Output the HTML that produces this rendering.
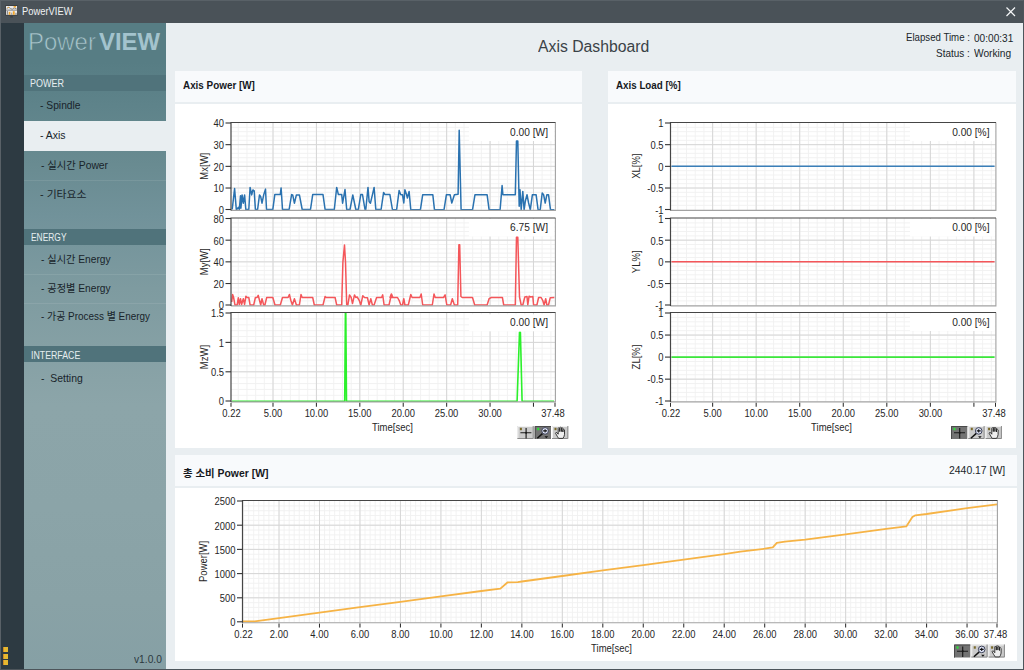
<!DOCTYPE html>
<html lang="ko"><head><meta charset="utf-8"><title>PowerVIEW</title>
<style>
*{margin:0;padding:0;box-sizing:border-box}
html,body{width:1024px;height:670px;overflow:hidden;background:#e9eef1}
body{position:relative;font-family:"Liberation Sans", "Noto Sans CJK KR", "NanumGothic", sans-serif;font-size:10.5px;color:#1f2a30}
.abs{position:absolute}
.t{position:absolute;display:inline-block;white-space:pre;line-height:1;transform-origin:0 50%}
#title{left:0;top:0;width:1024px;height:22.5px;background:#4a5258}
#frame{left:0;top:0;width:1024px;height:670px;border:1px solid #4d555b;border-top-color:#596167;border-left-color:#596167}
#strip{left:1px;top:22.5px;width:23px;height:646.5px;background:#2d3a42}
#side{left:24px;top:22.5px;width:142px;height:646.5px;background:linear-gradient(#577d84 0%,#577d84 6%,#5e838a 12.8%,#698b91 21.9%,#71929a 29.8%,#7e9ba0 41.1%,#8ca5a9 59.2%,#8ba4a8 75%,#89a2a6 89.3%,#86a0a5 100%)}
.hd{left:24px;width:142px;height:16.3px;background:#50737b}
.sep{left:24px;width:142px;height:1px;background:rgba(255,255,255,.09)}
.sel{left:24px;width:146px;height:29.6px;background:#e9eef1}
.ph{background:#f8fafc;height:31px}
.pb{background:#fff}
.sq{left:3px;width:5.2px;height:5.2px;background:#e6b830;box-shadow:inset 1px 0 0 #d08a28}
svg text.tk{font-family:"Liberation Sans", "Noto Sans CJK KR", "NanumGothic", sans-serif;font-size:10px;fill:#262626}
</style></head><body>
<div id="title" class="abs">
<svg class="abs" style="left:0;top:0" width="24" height="22" viewBox="0 0 24 22"><rect x="5.3" y="5.1" width="12.5" height="10.6" fill="#3b3f42"/><rect x="6" y="6" width="11.1" height="8.8" fill="#ececec"/><rect x="6" y="9.6" width="11.1" height="1.1" fill="#8f8f8f"/><path d="M6.6 8.6l2.2-1.4 1.6 1.2 1.8.9 1.9-1.4 2.6 1" stroke="#7c7c7c" stroke-width=".9" fill="none"/><rect x="13.6" y="6" width="2.4" height="1.5" fill="#f2a62c"/><rect x="7.6" y="7" width="1.2" height="1.1" fill="#f2a62c"/><rect x="6.8" y="11" width="1" height="3.6" fill="#777"/><rect x="8.7" y="11.8" width="1.7" height="3" fill="#f2a62c"/><rect x="11.2" y="12.6" width="1" height="2.2" fill="#999"/><rect x="12.8" y="11.2" width="1.9" height="3.6" fill="#f2a62c"/><rect x="15.4" y="12.8" width="1.2" height="2" fill="#888"/><rect x="10.2" y="16.1" width="2.7" height="1.5" fill="#3b3f42"/></svg>
<svg class="abs" style="left:1006px;top:6.5px" width="10" height="10" viewBox="0 0 10 10"><path d="M.5 .5L9 9M9 .5L.5 9" stroke="#f4f6f7" stroke-width="1.2" fill="none"/></svg>
</div>
<div id="strip" class="abs"></div>
<div class="abs sq" style="top:647px"></div>
<div class="abs sq" style="top:653.5px"></div>
<div class="abs sq" style="top:660px"></div>
<div id="side" class="abs"></div>
<div class="abs hd" style="top:74.9px"></div>
<div class="abs sel" style="top:121.4px"></div>
<div class="abs sep" style="top:180.3px"></div>
<div class="abs hd" style="top:229px"></div>
<div class="abs sep" style="top:273.8px"></div>
<div class="abs sep" style="top:302.5px"></div>
<div class="abs hd" style="top:346px"></div>

<div class="abs ph" style="left:174.6px;top:71px;width:407.8px"></div>
<div class="abs pb" style="left:174.6px;top:104px;width:407.8px;height:344px"></div>
<div class="abs ph" style="left:608px;top:71px;width:407.8px"></div>
<div class="abs pb" style="left:608px;top:104px;width:407.8px;height:344px"></div>
<div class="abs ph" style="left:174.6px;top:455px;width:842px"></div>
<div class="abs pb" style="left:174.6px;top:488px;width:842px;height:172.6px"></div>
<svg width="1024" height="670" viewBox="0 0 1024 670" style="position:absolute;left:0;top:0">
<rect x="231.0" y="122.5" width="324.0" height="87.5" fill="#fff"/>
<path d="M238.27 122.5V210.0M246.95 122.5V210.0M255.64 122.5V210.0M264.32 122.5V210.0M273.00 122.5V210.0M281.68 122.5V210.0M290.37 122.5V210.0M299.05 122.5V210.0M307.73 122.5V210.0M316.41 122.5V210.0M325.09 122.5V210.0M333.78 122.5V210.0M342.46 122.5V210.0M351.14 122.5V210.0M359.82 122.5V210.0M368.51 122.5V210.0M377.19 122.5V210.0M385.87 122.5V210.0M394.55 122.5V210.0M403.23 122.5V210.0M411.92 122.5V210.0M420.60 122.5V210.0M429.28 122.5V210.0M437.96 122.5V210.0M446.65 122.5V210.0M455.33 122.5V210.0M464.01 122.5V210.0M472.69 122.5V210.0M481.37 122.5V210.0M490.06 122.5V210.0M498.74 122.5V210.0M507.42 122.5V210.0M516.10 122.5V210.0M524.79 122.5V210.0M533.47 122.5V210.0M542.15 122.5V210.0M550.83 122.5V210.0M231.0 205.36H555.0M231.0 201.03H555.0M231.0 196.69H555.0M231.0 192.36H555.0M231.0 188.02H555.0M231.0 183.69H555.0M231.0 179.35H555.0M231.0 175.02H555.0M231.0 170.69H555.0M231.0 166.35H555.0M231.0 162.01H555.0M231.0 157.68H555.0M231.0 153.34H555.0M231.0 149.01H555.0M231.0 144.67H555.0M231.0 140.34H555.0M231.0 136.00H555.0M231.0 131.67H555.0M231.0 127.33H555.0" stroke="#f0f0f0" stroke-width="0.9" fill="none"/>
<path d="M273.00 122.5V210.0M316.41 122.5V210.0M359.82 122.5V210.0M403.23 122.5V210.0M446.65 122.5V210.0M490.06 122.5V210.0M533.47 122.5V210.0M231.0 188.02H555.0M231.0 166.35H555.0M231.0 144.67H555.0" stroke="#d6d6d6" stroke-width="1" fill="none"/>
<rect x="469.0" y="123.2" width="85.4" height="17.8" fill="#fff"/>
<polyline points="232.2,209.5 234.6,188.6 236.3,209.5 237.1,209.0 238.3,207.4 239.3,209.5 240.5,195.7 240.9,208.2 242.1,194.9 243.3,203.2 244.6,194.9 245.8,209.5 248.8,209.5 250.1,187.4 251.7,194.9 252.9,189.9 254.2,190.8 255.4,209.5 257.6,209.5 259.5,194.9 260.7,196.6 262.0,203.2 263.7,194.9 265.5,189.1 266.5,209.5 272.8,209.5 274.8,194.6 280.3,194.6 281.1,187.9 282.5,209.5 289.1,209.5 291.6,194.6 292.7,194.9 294.4,203.2 296.4,194.9 299.4,194.9 302.2,209.5 310.5,209.5 312.7,194.6 323.0,194.6 325.1,209.5 334.3,209.5 336.7,187.4 338.4,194.6 341.7,194.6 342.6,203.2 345.0,189.6 346.7,209.5 350.0,209.5 352.8,194.9 355.8,209.5 358.3,209.5 360.8,194.6 362.5,194.6 365.0,209.5 365.8,209.5 368.0,187.4 369.1,201.5 370.4,203.2 372.4,194.9 374.1,187.4 375.8,209.5 381.1,209.5 383.6,192.4 384.9,194.6 389.9,194.6 392.4,209.5 396.6,209.8 399.1,190.6 400.8,194.7 402.5,194.7 403.8,203.0 404.9,189.7 406.6,194.7 407.4,198.0 409.1,191.4 410.8,209.8 420.4,209.8 422.7,194.7 432.8,194.7 434.5,209.8 444.0,209.8 446.4,194.7 450.1,194.7 451.8,203.0 454.4,194.7 458.1,194.2 459.2,130.3 461.1,209.8 472.5,209.8 475.0,194.7 487.1,194.7 489.1,209.8 500.1,209.8 502.1,185.6 502.9,194.7 515.3,194.7 516.5,141.1 517.8,141.1 519.2,206.3 520.0,189.7 521.2,209.8 522.8,191.4 524.1,209.8 525.3,201.3 527.0,194.7 528.6,203.0 530.3,209.8 532.4,194.7 536.1,194.7 538.1,209.8 540.2,209.8 542.2,193.0 543.6,194.7 545.2,203.0 546.9,194.7 548.5,194.7 550.5,209.8 554.4,209.8" fill="none" stroke="#2a72b0" stroke-width="1.50" stroke-linejoin="round"/>
<path d="M555.4 122.5V210.4H231.0" stroke="#a2a2a2" stroke-width="1.1" fill="none"/>
<path d="M231.0 210.5V122.5H555.5" stroke="#454545" stroke-width="1.2" fill="none"/>
<path d="M225.5 209.50H231.0" stroke="#333" stroke-width="1.1"/>
<text transform="translate(224.0,213.8) scale(0.940,1)" text-anchor="end" class="tk">0</text>
<path d="M225.5 188.02H231.0" stroke="#333" stroke-width="1.1"/>
<text transform="translate(224.0,192.3) scale(0.940,1)" text-anchor="end" class="tk">10</text>
<path d="M225.5 166.35H231.0" stroke="#333" stroke-width="1.1"/>
<text transform="translate(224.0,170.7) scale(0.940,1)" text-anchor="end" class="tk">20</text>
<path d="M225.5 144.67H231.0" stroke="#333" stroke-width="1.1"/>
<text transform="translate(224.0,149.0) scale(0.940,1)" text-anchor="end" class="tk">30</text>
<path d="M225.5 123.00H231.0" stroke="#333" stroke-width="1.1"/>
<text transform="translate(224.0,127.3) scale(0.940,1)" text-anchor="end" class="tk">40</text>
<text transform="translate(548.0,135.9) scale(.97,1)" text-anchor="end" class="tk" style="font-size:10.5px">0.00 [W]</text>
<text transform="translate(208.0,166.2) rotate(-90) scale(.95,1)" text-anchor="middle" class="tk">Mx[W]</text>
<rect x="231.0" y="218.0" width="324.0" height="87.5" fill="#fff"/>
<path d="M238.27 218.0V305.5M246.95 218.0V305.5M255.64 218.0V305.5M264.32 218.0V305.5M273.00 218.0V305.5M281.68 218.0V305.5M290.37 218.0V305.5M299.05 218.0V305.5M307.73 218.0V305.5M316.41 218.0V305.5M325.09 218.0V305.5M333.78 218.0V305.5M342.46 218.0V305.5M351.14 218.0V305.5M359.82 218.0V305.5M368.51 218.0V305.5M377.19 218.0V305.5M385.87 218.0V305.5M394.55 218.0V305.5M403.23 218.0V305.5M411.92 218.0V305.5M420.60 218.0V305.5M429.28 218.0V305.5M437.96 218.0V305.5M446.65 218.0V305.5M455.33 218.0V305.5M464.01 218.0V305.5M472.69 218.0V305.5M481.37 218.0V305.5M490.06 218.0V305.5M498.74 218.0V305.5M507.42 218.0V305.5M516.10 218.0V305.5M524.79 218.0V305.5M533.47 218.0V305.5M542.15 218.0V305.5M550.83 218.0V305.5M231.0 300.87H555.0M231.0 296.53H555.0M231.0 292.19H555.0M231.0 287.86H555.0M231.0 283.52H555.0M231.0 279.19H555.0M231.0 274.86H555.0M231.0 270.52H555.0M231.0 266.19H555.0M231.0 261.85H555.0M231.0 257.51H555.0M231.0 253.18H555.0M231.0 248.84H555.0M231.0 244.51H555.0M231.0 240.17H555.0M231.0 235.84H555.0M231.0 231.50H555.0M231.0 227.17H555.0M231.0 222.83H555.0" stroke="#f0f0f0" stroke-width="0.9" fill="none"/>
<path d="M273.00 218.0V305.5M316.41 218.0V305.5M359.82 218.0V305.5M403.23 218.0V305.5M446.65 218.0V305.5M490.06 218.0V305.5M533.47 218.0V305.5M231.0 283.52H555.0M231.0 261.85H555.0M231.0 240.17H555.0" stroke="#d6d6d6" stroke-width="1" fill="none"/>
<rect x="469.0" y="218.7" width="85.4" height="17.8" fill="#fff"/>
<polyline points="231.7,302.0 232.6,294.5 233.5,297.0 235.0,305.1 237.1,305.1 238.3,297.8 239.3,304.5 240.5,298.7 241.6,304.5 243.3,298.7 244.6,304.5 245.9,296.2 247.1,297.5 248.8,297.5 250.1,305.0 253.7,305.0 255.4,297.5 257.1,297.5 258.2,295.3 259.5,300.3 260.7,305.0 262.0,298.7 263.7,305.0 264.9,305.0 266.7,297.5 272.8,297.5 275.0,305.0 280.3,305.0 282.5,297.5 288.1,297.5 289.4,294.5 290.8,300.3 292.4,305.0 294.4,298.7 296.4,305.0 299.4,305.0 301.0,294.5 302.2,297.5 312.7,297.5 314.3,305.0 323.0,305.0 325.1,296.5 326.3,297.5 335.1,297.5 336.7,305.0 341.7,305.0 342.9,262.1 344.5,245.0 345.5,262.1 346.7,304.5 347.9,305.0 349.5,294.9 351.2,297.5 352.5,303.6 354.5,294.9 355.8,297.5 357.2,297.0 359.2,300.3 360.8,305.0 362.8,295.7 364.5,297.5 367.5,297.8 369.1,305.0 370.8,298.7 372.4,305.0 374.1,305.0 376.6,297.5 381.6,297.5 382.7,294.9 384.1,305.0 389.0,305.0 391.5,294.0 392.9,297.5 390.0,297.5 391.3,294.0 392.5,297.5 397.5,297.5 399.1,300.3 400.8,305.0 402.5,305.0 403.8,298.7 404.9,305.0 408.3,305.0 410.8,294.5 412.1,297.5 419.9,297.5 421.2,294.0 422.7,305.0 432.3,305.0 434.0,294.0 435.2,297.5 443.5,297.5 445.1,294.9 446.8,305.0 450.6,305.0 452.3,298.7 454.4,305.0 457.7,305.0 458.9,244.7 459.7,244.7 460.9,296.5 462.2,297.5 472.5,297.5 474.7,305.0 487.1,305.0 489.1,298.7 491.3,297.5 502.4,297.5 503.7,305.0 515.3,305.0 516.5,237.2 517.8,237.2 519.5,297.0 521.2,305.0 522.8,305.0 524.8,297.0 527.0,296.5 527.8,305.0 529.1,296.2 530.8,297.0 532.8,296.5 533.6,305.0 536.9,305.0 538.6,297.5 541.1,297.5 542.7,300.3 544.1,305.0 545.7,298.7 546.9,305.0 548.5,305.0 550.2,297.8 554.4,297.5" fill="none" stroke="#f4565a" stroke-width="1.50" stroke-linejoin="round"/>
<path d="M555.4 218.0V305.9H231.0" stroke="#a2a2a2" stroke-width="1.1" fill="none"/>
<path d="M231.0 306.0V218.0H555.5" stroke="#454545" stroke-width="1.2" fill="none"/>
<path d="M225.5 305.00H231.0" stroke="#333" stroke-width="1.1"/>
<text transform="translate(224.0,309.3) scale(0.940,1)" text-anchor="end" class="tk">0</text>
<path d="M225.5 283.52H231.0" stroke="#333" stroke-width="1.1"/>
<text transform="translate(224.0,287.8) scale(0.940,1)" text-anchor="end" class="tk">20</text>
<path d="M225.5 261.85H231.0" stroke="#333" stroke-width="1.1"/>
<text transform="translate(224.0,266.1) scale(0.940,1)" text-anchor="end" class="tk">40</text>
<path d="M225.5 240.17H231.0" stroke="#333" stroke-width="1.1"/>
<text transform="translate(224.0,244.5) scale(0.940,1)" text-anchor="end" class="tk">60</text>
<path d="M225.5 218.50H231.0" stroke="#333" stroke-width="1.1"/>
<text transform="translate(224.0,222.8) scale(0.940,1)" text-anchor="end" class="tk">80</text>
<text transform="translate(548.0,231.4) scale(.97,1)" text-anchor="end" class="tk" style="font-size:10.5px">6.75 [W]</text>
<text transform="translate(208.0,261.8) rotate(-90) scale(.95,1)" text-anchor="middle" class="tk">My[W]</text>
<rect x="231.0" y="312.5" width="324.0" height="89.0" fill="#fff"/>
<path d="M238.27 312.5V401.5M246.95 312.5V401.5M255.64 312.5V401.5M264.32 312.5V401.5M273.00 312.5V401.5M281.68 312.5V401.5M290.37 312.5V401.5M299.05 312.5V401.5M307.73 312.5V401.5M316.41 312.5V401.5M325.09 312.5V401.5M333.78 312.5V401.5M342.46 312.5V401.5M351.14 312.5V401.5M359.82 312.5V401.5M368.51 312.5V401.5M377.19 312.5V401.5M385.87 312.5V401.5M394.55 312.5V401.5M403.23 312.5V401.5M411.92 312.5V401.5M420.60 312.5V401.5M429.28 312.5V401.5M437.96 312.5V401.5M446.65 312.5V401.5M455.33 312.5V401.5M464.01 312.5V401.5M472.69 312.5V401.5M481.37 312.5V401.5M490.06 312.5V401.5M498.74 312.5V401.5M507.42 312.5V401.5M516.10 312.5V401.5M524.79 312.5V401.5M533.47 312.5V401.5M542.15 312.5V401.5M550.83 312.5V401.5M231.0 395.32H555.0M231.0 389.44H555.0M231.0 383.56H555.0M231.0 377.68H555.0M231.0 371.80H555.0M231.0 365.92H555.0M231.0 360.04H555.0M231.0 354.16H555.0M231.0 348.28H555.0M231.0 342.40H555.0M231.0 336.52H555.0M231.0 330.64H555.0M231.0 324.76H555.0M231.0 318.88H555.0" stroke="#f0f0f0" stroke-width="0.9" fill="none"/>
<path d="M273.00 312.5V401.5M316.41 312.5V401.5M359.82 312.5V401.5M403.23 312.5V401.5M446.65 312.5V401.5M490.06 312.5V401.5M533.47 312.5V401.5M231.0 371.80H555.0M231.0 342.40H555.0" stroke="#d6d6d6" stroke-width="1" fill="none"/>
<polyline points="232.0,401.2 344.7,401.2 345.4,313.0 345.8,313.0 346.5,401.2 517.1,401.2 519.5,332.4 520.4,332.4 522.1,401.2 554.0,401.2" fill="none" stroke="#2cf02c" stroke-width="1.60" stroke-linejoin="round"/>
<path d="M555.4 312.5V401.9H231.0" stroke="#a2a2a2" stroke-width="1.1" fill="none"/>
<path d="M231.0 402.0V312.5H555.5" stroke="#454545" stroke-width="1.2" fill="none"/>
<path d="M225.5 401.00H231.0" stroke="#333" stroke-width="1.1"/>
<text transform="translate(224.0,405.3) scale(0.940,1)" text-anchor="end" class="tk">0</text>
<path d="M225.5 371.80H231.0" stroke="#333" stroke-width="1.1"/>
<text transform="translate(224.0,376.1) scale(0.940,1)" text-anchor="end" class="tk">0.5</text>
<path d="M225.5 342.40H231.0" stroke="#333" stroke-width="1.1"/>
<text transform="translate(224.0,346.7) scale(0.940,1)" text-anchor="end" class="tk">1</text>
<path d="M225.5 313.00H231.0" stroke="#333" stroke-width="1.1"/>
<text transform="translate(224.0,317.3) scale(0.940,1)" text-anchor="end" class="tk">1.5</text>
<text transform="translate(548.0,325.9) scale(.97,1)" text-anchor="end" class="tk" style="font-size:10.5px">0.00 [W]</text>
<text transform="translate(208.0,357.0) rotate(-90) scale(.95,1)" text-anchor="middle" class="tk">MzW]</text>
<path d="M231.00 402.8V406.8" stroke="#2e2e2e" stroke-width="1.05"/>
<path d="M273.00 402.8V406.8" stroke="#2e2e2e" stroke-width="1.05"/>
<path d="M316.41 402.8V406.8" stroke="#2e2e2e" stroke-width="1.05"/>
<path d="M359.82 402.8V406.8" stroke="#2e2e2e" stroke-width="1.05"/>
<path d="M403.23 402.8V406.8" stroke="#2e2e2e" stroke-width="1.05"/>
<path d="M446.65 402.8V406.8" stroke="#2e2e2e" stroke-width="1.05"/>
<path d="M490.06 402.8V406.8" stroke="#2e2e2e" stroke-width="1.05"/>
<path d="M533.47 402.8V406.8" stroke="#2e2e2e" stroke-width="1.05"/>
<path d="M555.00 402.8V406.8" stroke="#2e2e2e" stroke-width="1.05"/>
<text transform="translate(231.5,417.1) scale(0.940,1)" text-anchor="middle" class="tk">0.22</text>
<text transform="translate(273.0,417.1) scale(0.940,1)" text-anchor="middle" class="tk">5.00</text>
<text transform="translate(316.4,417.1) scale(0.940,1)" text-anchor="middle" class="tk">10.00</text>
<text transform="translate(359.8,417.1) scale(0.940,1)" text-anchor="middle" class="tk">15.00</text>
<text transform="translate(403.2,417.1) scale(0.940,1)" text-anchor="middle" class="tk">20.00</text>
<text transform="translate(446.6,417.1) scale(0.940,1)" text-anchor="middle" class="tk">25.00</text>
<text transform="translate(490.1,417.1) scale(0.940,1)" text-anchor="middle" class="tk">30.00</text>
<text transform="translate(553.0,417.1) scale(0.940,1)" text-anchor="middle" class="tk">37.48</text>
<text transform="translate(392.4,430.8) scale(0.950,1)" text-anchor="middle" class="tk">Time[sec]</text>
<rect x="469" y="314.3" width="85.4" height="17" fill="#fff"/><text transform="translate(548,325.9) scale(.97,1)" text-anchor="end" class="tk" style="font-size:10.5px">0.00 [W]</text>
<rect x="517.4" y="426.0" width="16.3" height="13" fill="#cbcbcb"/>
<path d="M517.9 439.0V426.5H533.7" stroke="#f2f2f2" stroke-width="1" fill="none"/>
<path d="M533.2 426.0V438.5H517.4" stroke="#8a8a8a" stroke-width="1" fill="none"/>
<rect x="519.9" y="427.8" width="2" height="2.4" fill="#7a6a2a"/>
<path d="M520.4 432.7H531.4M526.1 428.0V438.6" stroke="#1a1a1a" stroke-width="1.15" fill="none"/>
<circle cx="526.1" cy="432.7" r="1" fill="#1a1a1a"/>
<rect x="534.7" y="426.0" width="16.3" height="13" fill="#737373"/>
<path d="M535.2 439.0V426.5H551.0" stroke="#4a4a4a" stroke-width="1" fill="none"/>
<rect x="537.2" y="427.8" width="2" height="2.4" fill="#2fe03a"/>
<path d="M542.7 433.4L537.3 438.2" stroke="#111" stroke-width="1.5"/>
<circle cx="545.1" cy="430.9" r="3.3" fill="#e6ebff" stroke="#3a3f55" stroke-width="1"/>
<path d="M543.1 430.9H547.1M545.1 429.2V432.6" stroke="#111" stroke-width="1.1"/>
<path d="M544.5 436.3h3.6l-1.8 2z" fill="#111"/>
<rect x="552.0" y="426.0" width="16.3" height="13" fill="#cbcbcb"/>
<path d="M552.5 439.0V426.5H568.3" stroke="#f2f2f2" stroke-width="1" fill="none"/>
<path d="M567.8 426.0V438.5H552.0" stroke="#8a8a8a" stroke-width="1" fill="none"/>
<rect x="554.5" y="427.8" width="2" height="2.4" fill="#7a6a2a"/>
<path d="M558.6 438.4L557.2 436.2L555.5 433.2L556.4 432.2L558.2 434.2L558.2 428.4L558.9 427.6L559.7 428.4L559.7 431.6L559.7 427.8L560.5 427.0L561.3 427.8L561.3 431.6L561.3 428.4L562.1 427.7L562.9 428.4L562.9 432.0L562.9 429.8L563.7 429.2L564.5 429.9L564.5 434.6L563.9 436.8L562.9 438.4z" fill="#efefef" stroke="#1c1c1c" stroke-width=".85" stroke-linejoin="round"/>
<rect x="670.5" y="122.5" width="325.0" height="87.5" fill="#fff"/>
<path d="M677.79 122.5V210.0M686.50 122.5V210.0M695.21 122.5V210.0M703.92 122.5V210.0M712.63 122.5V210.0M721.34 122.5V210.0M730.05 122.5V210.0M738.76 122.5V210.0M747.47 122.5V210.0M756.17 122.5V210.0M764.88 122.5V210.0M773.59 122.5V210.0M782.30 122.5V210.0M791.01 122.5V210.0M799.72 122.5V210.0M808.43 122.5V210.0M817.14 122.5V210.0M825.85 122.5V210.0M834.56 122.5V210.0M843.27 122.5V210.0M851.97 122.5V210.0M860.68 122.5V210.0M869.39 122.5V210.0M878.10 122.5V210.0M886.81 122.5V210.0M895.52 122.5V210.0M904.23 122.5V210.0M912.94 122.5V210.0M921.65 122.5V210.0M930.36 122.5V210.0M939.07 122.5V210.0M947.77 122.5V210.0M956.48 122.5V210.0M965.19 122.5V210.0M973.90 122.5V210.0M982.61 122.5V210.0M991.32 122.5V210.0M670.5 205.36H995.5M670.5 201.03H995.5M670.5 196.69H995.5M670.5 192.36H995.5M670.5 188.02H995.5M670.5 183.69H995.5M670.5 179.35H995.5M670.5 175.02H995.5M670.5 170.69H995.5M670.5 166.35H995.5M670.5 162.01H995.5M670.5 157.68H995.5M670.5 153.34H995.5M670.5 149.01H995.5M670.5 144.67H995.5M670.5 140.34H995.5M670.5 136.00H995.5M670.5 131.67H995.5M670.5 127.33H995.5" stroke="#f0f0f0" stroke-width="0.9" fill="none"/>
<path d="M712.63 122.5V210.0M756.17 122.5V210.0M799.72 122.5V210.0M843.27 122.5V210.0M886.81 122.5V210.0M930.36 122.5V210.0M973.90 122.5V210.0M670.5 188.02H995.5M670.5 166.35H995.5M670.5 144.67H995.5" stroke="#d6d6d6" stroke-width="1" fill="none"/>
<rect x="910.0" y="123.2" width="84.9" height="17.8" fill="#fff"/>
<polyline points="671.5,166.3 994.5,166.3" fill="none" stroke="#3b7fb8" stroke-width="1.60" stroke-linejoin="round"/>
<path d="M995.9 122.5V210.4H670.5" stroke="#a2a2a2" stroke-width="1.1" fill="none"/>
<path d="M670.5 210.5V122.5H996.0" stroke="#454545" stroke-width="1.2" fill="none"/>
<path d="M665.0 209.50H670.5" stroke="#333" stroke-width="1.1"/>
<text transform="translate(663.5,213.8) scale(0.940,1)" text-anchor="end" class="tk">-1</text>
<path d="M665.0 188.02H670.5" stroke="#333" stroke-width="1.1"/>
<text transform="translate(663.5,192.3) scale(0.940,1)" text-anchor="end" class="tk">-0.5</text>
<path d="M665.0 166.35H670.5" stroke="#333" stroke-width="1.1"/>
<text transform="translate(663.5,170.7) scale(0.940,1)" text-anchor="end" class="tk">0</text>
<path d="M665.0 144.67H670.5" stroke="#333" stroke-width="1.1"/>
<text transform="translate(663.5,149.0) scale(0.940,1)" text-anchor="end" class="tk">0.5</text>
<path d="M665.0 123.00H670.5" stroke="#333" stroke-width="1.1"/>
<text transform="translate(663.5,127.3) scale(0.940,1)" text-anchor="end" class="tk">1</text>
<text transform="translate(989.5,135.9) scale(.97,1)" text-anchor="end" class="tk" style="font-size:10.5px">0.00 [%]</text>
<text transform="translate(640.0,166.2) rotate(-90) scale(.95,1)" text-anchor="middle" class="tk">XL[%]</text>
<rect x="670.5" y="218.0" width="325.0" height="87.5" fill="#fff"/>
<path d="M677.79 218.0V305.5M686.50 218.0V305.5M695.21 218.0V305.5M703.92 218.0V305.5M712.63 218.0V305.5M721.34 218.0V305.5M730.05 218.0V305.5M738.76 218.0V305.5M747.47 218.0V305.5M756.17 218.0V305.5M764.88 218.0V305.5M773.59 218.0V305.5M782.30 218.0V305.5M791.01 218.0V305.5M799.72 218.0V305.5M808.43 218.0V305.5M817.14 218.0V305.5M825.85 218.0V305.5M834.56 218.0V305.5M843.27 218.0V305.5M851.97 218.0V305.5M860.68 218.0V305.5M869.39 218.0V305.5M878.10 218.0V305.5M886.81 218.0V305.5M895.52 218.0V305.5M904.23 218.0V305.5M912.94 218.0V305.5M921.65 218.0V305.5M930.36 218.0V305.5M939.07 218.0V305.5M947.77 218.0V305.5M956.48 218.0V305.5M965.19 218.0V305.5M973.90 218.0V305.5M982.61 218.0V305.5M991.32 218.0V305.5M670.5 300.87H995.5M670.5 296.53H995.5M670.5 292.19H995.5M670.5 287.86H995.5M670.5 283.52H995.5M670.5 279.19H995.5M670.5 274.85H995.5M670.5 270.52H995.5M670.5 266.19H995.5M670.5 261.85H995.5M670.5 257.51H995.5M670.5 253.18H995.5M670.5 248.84H995.5M670.5 244.51H995.5M670.5 240.17H995.5M670.5 235.84H995.5M670.5 231.50H995.5M670.5 227.17H995.5M670.5 222.83H995.5" stroke="#f0f0f0" stroke-width="0.9" fill="none"/>
<path d="M712.63 218.0V305.5M756.17 218.0V305.5M799.72 218.0V305.5M843.27 218.0V305.5M886.81 218.0V305.5M930.36 218.0V305.5M973.90 218.0V305.5M670.5 283.52H995.5M670.5 261.85H995.5M670.5 240.17H995.5" stroke="#d6d6d6" stroke-width="1" fill="none"/>
<rect x="910.0" y="218.7" width="84.9" height="17.8" fill="#fff"/>
<polyline points="671.5,261.8 994.5,261.8" fill="none" stroke="#f4565a" stroke-width="1.60" stroke-linejoin="round"/>
<path d="M995.9 218.0V305.9H670.5" stroke="#a2a2a2" stroke-width="1.1" fill="none"/>
<path d="M670.5 306.0V218.0H996.0" stroke="#454545" stroke-width="1.2" fill="none"/>
<path d="M665.0 305.00H670.5" stroke="#333" stroke-width="1.1"/>
<text transform="translate(663.5,309.3) scale(0.940,1)" text-anchor="end" class="tk">-1</text>
<path d="M665.0 283.52H670.5" stroke="#333" stroke-width="1.1"/>
<text transform="translate(663.5,287.8) scale(0.940,1)" text-anchor="end" class="tk">-0.5</text>
<path d="M665.0 261.85H670.5" stroke="#333" stroke-width="1.1"/>
<text transform="translate(663.5,266.1) scale(0.940,1)" text-anchor="end" class="tk">0</text>
<path d="M665.0 240.17H670.5" stroke="#333" stroke-width="1.1"/>
<text transform="translate(663.5,244.5) scale(0.940,1)" text-anchor="end" class="tk">0.5</text>
<path d="M665.0 218.50H670.5" stroke="#333" stroke-width="1.1"/>
<text transform="translate(663.5,222.8) scale(0.940,1)" text-anchor="end" class="tk">1</text>
<text transform="translate(989.5,231.4) scale(.97,1)" text-anchor="end" class="tk" style="font-size:10.5px">0.00 [%]</text>
<text transform="translate(640.0,261.8) rotate(-90) scale(.95,1)" text-anchor="middle" class="tk">YL%]</text>
<rect x="670.5" y="312.5" width="325.0" height="89.0" fill="#fff"/>
<path d="M677.79 312.5V401.5M686.50 312.5V401.5M695.21 312.5V401.5M703.92 312.5V401.5M712.63 312.5V401.5M721.34 312.5V401.5M730.05 312.5V401.5M738.76 312.5V401.5M747.47 312.5V401.5M756.17 312.5V401.5M764.88 312.5V401.5M773.59 312.5V401.5M782.30 312.5V401.5M791.01 312.5V401.5M799.72 312.5V401.5M808.43 312.5V401.5M817.14 312.5V401.5M825.85 312.5V401.5M834.56 312.5V401.5M843.27 312.5V401.5M851.97 312.5V401.5M860.68 312.5V401.5M869.39 312.5V401.5M878.10 312.5V401.5M886.81 312.5V401.5M895.52 312.5V401.5M904.23 312.5V401.5M912.94 312.5V401.5M921.65 312.5V401.5M930.36 312.5V401.5M939.07 312.5V401.5M947.77 312.5V401.5M956.48 312.5V401.5M965.19 312.5V401.5M973.90 312.5V401.5M982.61 312.5V401.5M991.32 312.5V401.5M670.5 396.79H995.5M670.5 392.38H995.5M670.5 387.97H995.5M670.5 383.56H995.5M670.5 379.15H995.5M670.5 374.74H995.5M670.5 370.33H995.5M670.5 365.92H995.5M670.5 361.51H995.5M670.5 357.10H995.5M670.5 352.69H995.5M670.5 348.28H995.5M670.5 343.87H995.5M670.5 339.46H995.5M670.5 335.05H995.5M670.5 330.64H995.5M670.5 326.23H995.5M670.5 321.82H995.5M670.5 317.41H995.5" stroke="#f0f0f0" stroke-width="0.9" fill="none"/>
<path d="M712.63 312.5V401.5M756.17 312.5V401.5M799.72 312.5V401.5M843.27 312.5V401.5M886.81 312.5V401.5M930.36 312.5V401.5M973.90 312.5V401.5M670.5 379.15H995.5M670.5 357.10H995.5M670.5 335.05H995.5" stroke="#d6d6d6" stroke-width="1" fill="none"/>
<rect x="910.0" y="313.2" width="84.9" height="17.8" fill="#fff"/>
<polyline points="671.5,357.1 994.5,357.1" fill="none" stroke="#3be83b" stroke-width="1.60" stroke-linejoin="round"/>
<path d="M995.9 312.5V401.9H670.5" stroke="#a2a2a2" stroke-width="1.1" fill="none"/>
<path d="M670.5 402.0V312.5H996.0" stroke="#454545" stroke-width="1.2" fill="none"/>
<path d="M665.0 401.00H670.5" stroke="#333" stroke-width="1.1"/>
<text transform="translate(663.5,405.3) scale(0.940,1)" text-anchor="end" class="tk">-1</text>
<path d="M665.0 379.15H670.5" stroke="#333" stroke-width="1.1"/>
<text transform="translate(663.5,383.4) scale(0.940,1)" text-anchor="end" class="tk">-0.5</text>
<path d="M665.0 357.10H670.5" stroke="#333" stroke-width="1.1"/>
<text transform="translate(663.5,361.4) scale(0.940,1)" text-anchor="end" class="tk">0</text>
<path d="M665.0 335.05H670.5" stroke="#333" stroke-width="1.1"/>
<text transform="translate(663.5,339.3) scale(0.940,1)" text-anchor="end" class="tk">0.5</text>
<path d="M665.0 313.00H670.5" stroke="#333" stroke-width="1.1"/>
<text transform="translate(663.5,317.3) scale(0.940,1)" text-anchor="end" class="tk">1</text>
<text transform="translate(989.5,325.9) scale(.97,1)" text-anchor="end" class="tk" style="font-size:10.5px">0.00 [%]</text>
<text transform="translate(640.0,357.0) rotate(-90) scale(.95,1)" text-anchor="middle" class="tk">ZL[%]</text>
<path d="M670.50 402.8V406.8" stroke="#2e2e2e" stroke-width="1.05"/>
<path d="M712.63 402.8V406.8" stroke="#2e2e2e" stroke-width="1.05"/>
<path d="M756.17 402.8V406.8" stroke="#2e2e2e" stroke-width="1.05"/>
<path d="M799.72 402.8V406.8" stroke="#2e2e2e" stroke-width="1.05"/>
<path d="M843.27 402.8V406.8" stroke="#2e2e2e" stroke-width="1.05"/>
<path d="M886.81 402.8V406.8" stroke="#2e2e2e" stroke-width="1.05"/>
<path d="M930.36 402.8V406.8" stroke="#2e2e2e" stroke-width="1.05"/>
<path d="M973.90 402.8V406.8" stroke="#2e2e2e" stroke-width="1.05"/>
<path d="M995.50 402.8V406.8" stroke="#2e2e2e" stroke-width="1.05"/>
<text transform="translate(671.0,417.1) scale(0.940,1)" text-anchor="middle" class="tk">0.22</text>
<text transform="translate(712.6,417.1) scale(0.940,1)" text-anchor="middle" class="tk">5.00</text>
<text transform="translate(756.2,417.1) scale(0.940,1)" text-anchor="middle" class="tk">10.00</text>
<text transform="translate(799.7,417.1) scale(0.940,1)" text-anchor="middle" class="tk">15.00</text>
<text transform="translate(843.3,417.1) scale(0.940,1)" text-anchor="middle" class="tk">20.00</text>
<text transform="translate(886.8,417.1) scale(0.940,1)" text-anchor="middle" class="tk">25.00</text>
<text transform="translate(930.4,417.1) scale(0.940,1)" text-anchor="middle" class="tk">30.00</text>
<text transform="translate(994.0,417.1) scale(0.940,1)" text-anchor="middle" class="tk">37.48</text>
<text transform="translate(831.5,430.8) scale(0.950,1)" text-anchor="middle" class="tk">Time[sec]</text>
<rect x="951.0" y="426.0" width="16.3" height="13" fill="#737373"/>
<path d="M951.5 439.0V426.5H967.3" stroke="#4a4a4a" stroke-width="1" fill="none"/>
<rect x="953.5" y="427.8" width="2" height="2.4" fill="#2fe03a"/>
<path d="M954.0 432.7H965.0M959.7 428.0V438.6" stroke="#1a1a1a" stroke-width="1.15" fill="none"/>
<circle cx="959.7" cy="432.7" r="1" fill="#1a1a1a"/>
<rect x="968.3" y="426.0" width="16.3" height="13" fill="#cbcbcb"/>
<path d="M968.8 439.0V426.5H984.6" stroke="#f2f2f2" stroke-width="1" fill="none"/>
<path d="M984.1 426.0V438.5H968.3" stroke="#8a8a8a" stroke-width="1" fill="none"/>
<rect x="970.8" y="427.8" width="2" height="2.4" fill="#7a6a2a"/>
<path d="M976.3 433.4L970.9 438.2" stroke="#111" stroke-width="1.5"/>
<circle cx="978.7" cy="430.9" r="3.3" fill="#e6ebff" stroke="#3a3f55" stroke-width="1"/>
<path d="M976.7 430.9H980.7M978.7 429.2V432.6" stroke="#111" stroke-width="1.1"/>
<path d="M978.1 436.3h3.6l-1.8 2z" fill="#111"/>
<rect x="985.6" y="426.0" width="16.3" height="13" fill="#cbcbcb"/>
<path d="M986.1 439.0V426.5H1001.9" stroke="#f2f2f2" stroke-width="1" fill="none"/>
<path d="M1001.4 426.0V438.5H985.6" stroke="#8a8a8a" stroke-width="1" fill="none"/>
<rect x="988.1" y="427.8" width="2" height="2.4" fill="#7a6a2a"/>
<path d="M992.2 438.4L990.8 436.2L989.1 433.2L990.0 432.2L991.8 434.2L991.8 428.4L992.5 427.6L993.3 428.4L993.3 431.6L993.3 427.8L994.1 427.0L994.9 427.8L994.9 431.6L994.9 428.4L995.7 427.7L996.5 428.4L996.5 432.0L996.5 429.8L997.3 429.2L998.1 429.9L998.1 434.6L997.5 436.8L996.5 438.4z" fill="#efefef" stroke="#1c1c1c" stroke-width=".85" stroke-linejoin="round"/>
<rect x="242.5" y="500.5" width="754.5" height="121.8" fill="#fff"/>
<path d="M243.61 500.5V622.3M248.67 500.5V622.3M253.73 500.5V622.3M258.78 500.5V622.3M263.84 500.5V622.3M268.90 500.5V622.3M273.96 500.5V622.3M279.02 500.5V622.3M284.08 500.5V622.3M289.14 500.5V622.3M294.20 500.5V622.3M299.26 500.5V622.3M304.32 500.5V622.3M309.37 500.5V622.3M314.43 500.5V622.3M319.49 500.5V622.3M324.55 500.5V622.3M329.61 500.5V622.3M334.67 500.5V622.3M339.73 500.5V622.3M344.79 500.5V622.3M349.85 500.5V622.3M354.91 500.5V622.3M359.97 500.5V622.3M365.02 500.5V622.3M370.08 500.5V622.3M375.14 500.5V622.3M380.20 500.5V622.3M385.26 500.5V622.3M390.32 500.5V622.3M395.38 500.5V622.3M400.44 500.5V622.3M405.50 500.5V622.3M410.56 500.5V622.3M415.61 500.5V622.3M420.67 500.5V622.3M425.73 500.5V622.3M430.79 500.5V622.3M435.85 500.5V622.3M440.91 500.5V622.3M445.97 500.5V622.3M451.03 500.5V622.3M456.09 500.5V622.3M461.15 500.5V622.3M466.21 500.5V622.3M471.26 500.5V622.3M476.32 500.5V622.3M481.38 500.5V622.3M486.44 500.5V622.3M491.50 500.5V622.3M496.56 500.5V622.3M501.62 500.5V622.3M506.68 500.5V622.3M511.74 500.5V622.3M516.80 500.5V622.3M521.85 500.5V622.3M526.91 500.5V622.3M531.97 500.5V622.3M537.03 500.5V622.3M542.09 500.5V622.3M547.15 500.5V622.3M552.21 500.5V622.3M557.27 500.5V622.3M562.33 500.5V622.3M567.39 500.5V622.3M572.44 500.5V622.3M577.50 500.5V622.3M582.56 500.5V622.3M587.62 500.5V622.3M592.68 500.5V622.3M597.74 500.5V622.3M602.80 500.5V622.3M607.86 500.5V622.3M612.92 500.5V622.3M617.98 500.5V622.3M623.04 500.5V622.3M628.09 500.5V622.3M633.15 500.5V622.3M638.21 500.5V622.3M643.27 500.5V622.3M648.33 500.5V622.3M653.39 500.5V622.3M658.45 500.5V622.3M663.51 500.5V622.3M668.57 500.5V622.3M673.63 500.5V622.3M678.68 500.5V622.3M683.74 500.5V622.3M688.80 500.5V622.3M693.86 500.5V622.3M698.92 500.5V622.3M703.98 500.5V622.3M709.04 500.5V622.3M714.10 500.5V622.3M719.16 500.5V622.3M724.22 500.5V622.3M729.28 500.5V622.3M734.33 500.5V622.3M739.39 500.5V622.3M744.45 500.5V622.3M749.51 500.5V622.3M754.57 500.5V622.3M759.63 500.5V622.3M764.69 500.5V622.3M769.75 500.5V622.3M774.81 500.5V622.3M779.87 500.5V622.3M784.92 500.5V622.3M789.98 500.5V622.3M795.04 500.5V622.3M800.10 500.5V622.3M805.16 500.5V622.3M810.22 500.5V622.3M815.28 500.5V622.3M820.34 500.5V622.3M825.40 500.5V622.3M830.46 500.5V622.3M835.52 500.5V622.3M840.57 500.5V622.3M845.63 500.5V622.3M850.69 500.5V622.3M855.75 500.5V622.3M860.81 500.5V622.3M865.87 500.5V622.3M870.93 500.5V622.3M875.99 500.5V622.3M881.05 500.5V622.3M886.11 500.5V622.3M891.16 500.5V622.3M896.22 500.5V622.3M901.28 500.5V622.3M906.34 500.5V622.3M911.40 500.5V622.3M916.46 500.5V622.3M921.52 500.5V622.3M926.58 500.5V622.3M931.64 500.5V622.3M936.70 500.5V622.3M941.76 500.5V622.3M946.81 500.5V622.3M951.87 500.5V622.3M956.93 500.5V622.3M961.99 500.5V622.3M967.05 500.5V622.3M972.11 500.5V622.3M977.17 500.5V622.3M982.23 500.5V622.3M987.29 500.5V622.3M992.35 500.5V622.3M242.5 617.16H997.0M242.5 612.32H997.0M242.5 607.48H997.0M242.5 602.64H997.0M242.5 597.80H997.0M242.5 592.96H997.0M242.5 588.12H997.0M242.5 583.28H997.0M242.5 578.44H997.0M242.5 573.60H997.0M242.5 568.76H997.0M242.5 563.92H997.0M242.5 559.08H997.0M242.5 554.24H997.0M242.5 549.40H997.0M242.5 544.56H997.0M242.5 539.72H997.0M242.5 534.88H997.0M242.5 530.04H997.0M242.5 525.20H997.0M242.5 520.36H997.0M242.5 515.52H997.0M242.5 510.68H997.0M242.5 505.84H997.0" stroke="#f0f0f0" stroke-width="0.9" fill="none"/>
<path d="M279.02 500.5V622.3M319.49 500.5V622.3M359.97 500.5V622.3M400.44 500.5V622.3M440.91 500.5V622.3M481.38 500.5V622.3M521.85 500.5V622.3M562.33 500.5V622.3M602.80 500.5V622.3M643.27 500.5V622.3M683.74 500.5V622.3M724.22 500.5V622.3M764.69 500.5V622.3M805.16 500.5V622.3M845.63 500.5V622.3M886.11 500.5V622.3M926.58 500.5V622.3M967.05 500.5V622.3M242.5 597.80H997.0M242.5 573.60H997.0M242.5 549.40H997.0M242.5 525.20H997.0" stroke="#d6d6d6" stroke-width="1" fill="none"/>
<polyline points="243.0,621.4 254.7,621.3 279.0,618.2 319.5,612.6 360.0,607.2 400.4,601.8 440.9,596.3 481.4,591.0 500.4,588.6 507.7,582.3 517.8,582.2 521.9,581.5 562.3,576.0 602.8,570.4 643.3,565.1 683.7,559.6 724.2,554.2 740.4,551.7 764.7,548.7 772.8,547.4 776.8,542.9 784.9,541.6 805.2,539.6 845.6,534.3 886.1,528.9 906.3,526.4 912.4,517.1 915.4,515.3 926.6,514.0 967.1,508.2 997.0,504.3" fill="none" stroke="#f6b345" stroke-width="1.80" stroke-linejoin="round"/>
<path d="M997.4 500.5V622.8H242.5" stroke="#a2a2a2" stroke-width="1.1" fill="none"/>
<path d="M242.5 622.8V500.5H997.5" stroke="#454545" stroke-width="1.2" fill="none"/>
<path d="M237.0 621.80H242.5" stroke="#333" stroke-width="1.1"/>
<text transform="translate(235.5,626.1) scale(0.940,1)" text-anchor="end" class="tk">0</text>
<path d="M237.0 597.80H242.5" stroke="#333" stroke-width="1.1"/>
<text transform="translate(235.5,602.1) scale(0.940,1)" text-anchor="end" class="tk">500</text>
<path d="M237.0 573.60H242.5" stroke="#333" stroke-width="1.1"/>
<text transform="translate(235.5,577.9) scale(0.940,1)" text-anchor="end" class="tk">1000</text>
<path d="M237.0 549.40H242.5" stroke="#333" stroke-width="1.1"/>
<text transform="translate(235.5,553.7) scale(0.940,1)" text-anchor="end" class="tk">1500</text>
<path d="M237.0 525.20H242.5" stroke="#333" stroke-width="1.1"/>
<text transform="translate(235.5,529.5) scale(0.940,1)" text-anchor="end" class="tk">2000</text>
<path d="M237.0 501.00H242.5" stroke="#333" stroke-width="1.1"/>
<text transform="translate(235.5,505.3) scale(0.940,1)" text-anchor="end" class="tk">2500</text>
<text transform="translate(207.0,561.4) rotate(-90) scale(.95,1)" text-anchor="middle" class="tk">Power[W]</text>
<path d="M242.50 623.6V627.6" stroke="#2e2e2e" stroke-width="1.05"/>
<path d="M279.02 623.6V627.6" stroke="#2e2e2e" stroke-width="1.05"/>
<path d="M319.49 623.6V627.6" stroke="#2e2e2e" stroke-width="1.05"/>
<path d="M359.97 623.6V627.6" stroke="#2e2e2e" stroke-width="1.05"/>
<path d="M400.44 623.6V627.6" stroke="#2e2e2e" stroke-width="1.05"/>
<path d="M440.91 623.6V627.6" stroke="#2e2e2e" stroke-width="1.05"/>
<path d="M481.38 623.6V627.6" stroke="#2e2e2e" stroke-width="1.05"/>
<path d="M521.85 623.6V627.6" stroke="#2e2e2e" stroke-width="1.05"/>
<path d="M562.33 623.6V627.6" stroke="#2e2e2e" stroke-width="1.05"/>
<path d="M602.80 623.6V627.6" stroke="#2e2e2e" stroke-width="1.05"/>
<path d="M643.27 623.6V627.6" stroke="#2e2e2e" stroke-width="1.05"/>
<path d="M683.74 623.6V627.6" stroke="#2e2e2e" stroke-width="1.05"/>
<path d="M724.22 623.6V627.6" stroke="#2e2e2e" stroke-width="1.05"/>
<path d="M764.69 623.6V627.6" stroke="#2e2e2e" stroke-width="1.05"/>
<path d="M805.16 623.6V627.6" stroke="#2e2e2e" stroke-width="1.05"/>
<path d="M845.63 623.6V627.6" stroke="#2e2e2e" stroke-width="1.05"/>
<path d="M886.11 623.6V627.6" stroke="#2e2e2e" stroke-width="1.05"/>
<path d="M926.58 623.6V627.6" stroke="#2e2e2e" stroke-width="1.05"/>
<path d="M967.05 623.6V627.6" stroke="#2e2e2e" stroke-width="1.05"/>
<path d="M997.00 623.6V627.6" stroke="#2e2e2e" stroke-width="1.05"/>
<text transform="translate(243.5,637.9) scale(0.940,1)" text-anchor="middle" class="tk">0.22</text>
<text transform="translate(279.0,637.9) scale(0.940,1)" text-anchor="middle" class="tk">2.00</text>
<text transform="translate(319.5,637.9) scale(0.940,1)" text-anchor="middle" class="tk">4.00</text>
<text transform="translate(360.0,637.9) scale(0.940,1)" text-anchor="middle" class="tk">6.00</text>
<text transform="translate(400.4,637.9) scale(0.940,1)" text-anchor="middle" class="tk">8.00</text>
<text transform="translate(440.9,637.9) scale(0.940,1)" text-anchor="middle" class="tk">10.00</text>
<text transform="translate(481.4,637.9) scale(0.940,1)" text-anchor="middle" class="tk">12.00</text>
<text transform="translate(521.9,637.9) scale(0.940,1)" text-anchor="middle" class="tk">14.00</text>
<text transform="translate(562.3,637.9) scale(0.940,1)" text-anchor="middle" class="tk">16.00</text>
<text transform="translate(602.8,637.9) scale(0.940,1)" text-anchor="middle" class="tk">18.00</text>
<text transform="translate(643.3,637.9) scale(0.940,1)" text-anchor="middle" class="tk">20.00</text>
<text transform="translate(683.7,637.9) scale(0.940,1)" text-anchor="middle" class="tk">22.00</text>
<text transform="translate(724.2,637.9) scale(0.940,1)" text-anchor="middle" class="tk">24.00</text>
<text transform="translate(764.7,637.9) scale(0.940,1)" text-anchor="middle" class="tk">26.00</text>
<text transform="translate(805.2,637.9) scale(0.940,1)" text-anchor="middle" class="tk">28.00</text>
<text transform="translate(845.6,637.9) scale(0.940,1)" text-anchor="middle" class="tk">30.00</text>
<text transform="translate(886.1,637.9) scale(0.940,1)" text-anchor="middle" class="tk">32.00</text>
<text transform="translate(926.6,637.9) scale(0.940,1)" text-anchor="middle" class="tk">34.00</text>
<text transform="translate(967.1,637.9) scale(0.940,1)" text-anchor="middle" class="tk">36.00</text>
<text transform="translate(995.5,637.9) scale(0.940,1)" text-anchor="middle" class="tk">37.48</text>
<text transform="translate(611.5,651.6) scale(0.950,1)" text-anchor="middle" class="tk">Time[sec]</text>
<rect x="954.0" y="644.5" width="16.3" height="13" fill="#737373"/>
<path d="M954.5 657.5V645.0H970.3" stroke="#4a4a4a" stroke-width="1" fill="none"/>
<rect x="956.5" y="646.3" width="2" height="2.4" fill="#2fe03a"/>
<path d="M957.0 651.2H968.0M962.7 646.5V657.1" stroke="#1a1a1a" stroke-width="1.15" fill="none"/>
<circle cx="962.7" cy="651.2" r="1" fill="#1a1a1a"/>
<rect x="971.3" y="644.5" width="16.3" height="13" fill="#cbcbcb"/>
<path d="M971.8 657.5V645.0H987.6" stroke="#f2f2f2" stroke-width="1" fill="none"/>
<path d="M987.1 644.5V657.0H971.3" stroke="#8a8a8a" stroke-width="1" fill="none"/>
<rect x="973.8" y="646.3" width="2" height="2.4" fill="#7a6a2a"/>
<path d="M979.3 651.9L973.9 656.7" stroke="#111" stroke-width="1.5"/>
<circle cx="981.7" cy="649.4" r="3.3" fill="#e6ebff" stroke="#3a3f55" stroke-width="1"/>
<path d="M979.7 649.4H983.7M981.7 647.7V651.1" stroke="#111" stroke-width="1.1"/>
<path d="M981.1 654.8h3.6l-1.8 2z" fill="#111"/>
<rect x="988.6" y="644.5" width="16.3" height="13" fill="#cbcbcb"/>
<path d="M989.1 657.5V645.0H1004.9" stroke="#f2f2f2" stroke-width="1" fill="none"/>
<path d="M1004.4 644.5V657.0H988.6" stroke="#8a8a8a" stroke-width="1" fill="none"/>
<rect x="991.1" y="646.3" width="2" height="2.4" fill="#7a6a2a"/>
<path d="M995.2 656.9L993.8 654.7L992.1 651.7L993.0 650.7L994.8 652.7L994.8 646.9L995.5 646.1L996.3 646.9L996.3 650.1L996.3 646.3L997.1 645.5L997.9 646.3L997.9 650.1L997.9 646.9L998.7 646.2L999.5 646.9L999.5 650.5L999.5 648.3L1000.3 647.7L1001.1 648.4L1001.1 653.1L1000.5 655.3L999.5 656.9z" fill="#efefef" stroke="#1c1c1c" stroke-width=".85" stroke-linejoin="round"/>
</svg>
<span id="t_title" class="t" style="left:21.9px;top:6.0px;font-size:10.5px;color:#f0f3f4;transform:scaleX(0.8923)">PowerVIEW</span>
<span id="t_logo1" class="t" style="left:28.1px;top:30.5px;font-size:23.2px;color:#a9c6cd;-webkit-text-stroke:.6px #577d84;transform:scaleX(1.0325)">Power</span>
<span id="t_logo2" class="t" style="left:99.0px;top:30.5px;font-size:23.2px;color:#a3c3cd;transform:scaleX(1.0297);font-weight:bold">VIEW</span>
<span id="t_h1" class="t" style="left:30.4px;top:78.0px;font-size:10.5px;color:#e6eef0;transform:scaleX(0.8558)">POWER</span>
<span id="t_i1" class="t" style="left:40.1px;top:100.4px;font-size:10.5px;color:#18242a;transform:scaleX(0.9790)">- Spindle</span>
<span id="t_i2" class="t" style="left:40.0px;top:130.1px;font-size:10.5px;color:#18242a;transform:scaleX(0.9977)">- Axis</span>
<span id="t_i3" class="t" style="left:40.5px;top:159.8px;font-size:10.5px;color:#18242a;transform:scaleX(0.9852)">- 실시간 Power</span>
<span id="t_i4" class="t" style="left:40.3px;top:189.1px;font-size:10.5px;color:#18242a;transform:scaleX(1.0336)">- 기타요소</span>
<span id="t_h2" class="t" style="left:31.4px;top:232.4px;font-size:10.5px;color:#e6eef0;transform:scaleX(0.8012)">ENERGY</span>
<span id="t_i5" class="t" style="left:40.5px;top:253.9px;font-size:10.5px;color:#18242a;transform:scaleX(0.9728)">- 실시간 Energy</span>
<span id="t_i6" class="t" style="left:40.5px;top:283.1px;font-size:10.5px;color:#18242a;transform:scaleX(0.9728)">- 공정별 Energy</span>
<span id="t_i7" class="t" style="left:40.5px;top:311.4px;font-size:10.5px;color:#18242a;transform:scaleX(0.9445)">- 가공 Process 별 Energy</span>
<span id="t_h3" class="t" style="left:31.0px;top:349.5px;font-size:10.5px;color:#e6eef0;transform:scaleX(0.8357)">INTERFACE</span>
<span id="t_i8" class="t" style="left:41.2px;top:372.6px;font-size:10.5px;color:#18242a;transform:scaleX(0.9933)">-  Setting</span>
<span id="t_ver" class="t" style="left:134.1px;top:653.7px;font-size:10.5px;color:#2c393f;transform:scaleX(0.9734)">v1.0.0</span>
<span id="t_dash" class="t" style="left:538.0px;top:39.0px;font-size:16px;color:#3a4247;transform:scaleX(0.9844)">Axis Dashboard</span>
<span id="t_el1" class="t" style="left:905.7px;top:32.1px;font-size:10.5px;color:#20262a;transform:scaleX(0.9198)">Elapsed Time :</span>
<span id="t_el2" class="t" style="left:974.0px;top:32.6px;font-size:10.5px;color:#20262a;transform:scaleX(0.9605)">00:00:31</span>
<span id="t_st1" class="t" style="left:936.2px;top:48.4px;font-size:10.5px;color:#20262a;transform:scaleX(0.9461)">Status :</span>
<span id="t_st2" class="t" style="left:974.2px;top:48.4px;font-size:10.5px;color:#20262a;transform:scaleX(0.9712)">Working</span>
<span id="t_p1" class="t" style="left:183.2px;top:80.1px;font-size:10.5px;color:#15181c;transform:scaleX(0.9404);font-weight:bold">Axis Power [W]</span>
<span id="t_p2" class="t" style="left:616.0px;top:79.9px;font-size:10.5px;color:#15181c;transform:scaleX(0.9321);font-weight:bold">Axis Load [%]</span>
<span id="t_p3" class="t" style="left:182.6px;top:468.1px;font-size:10.5px;color:#15181c;transform:scaleX(0.9916);font-weight:bold">총 소비 Power [W]</span>
<span id="t_tot" class="t" style="left:948.8px;top:464.9px;font-size:10.5px;color:#20262a;transform:scaleX(0.9923)">2440.17 [W]</span>
<div id="frame" class="abs"></div>
</body></html>
